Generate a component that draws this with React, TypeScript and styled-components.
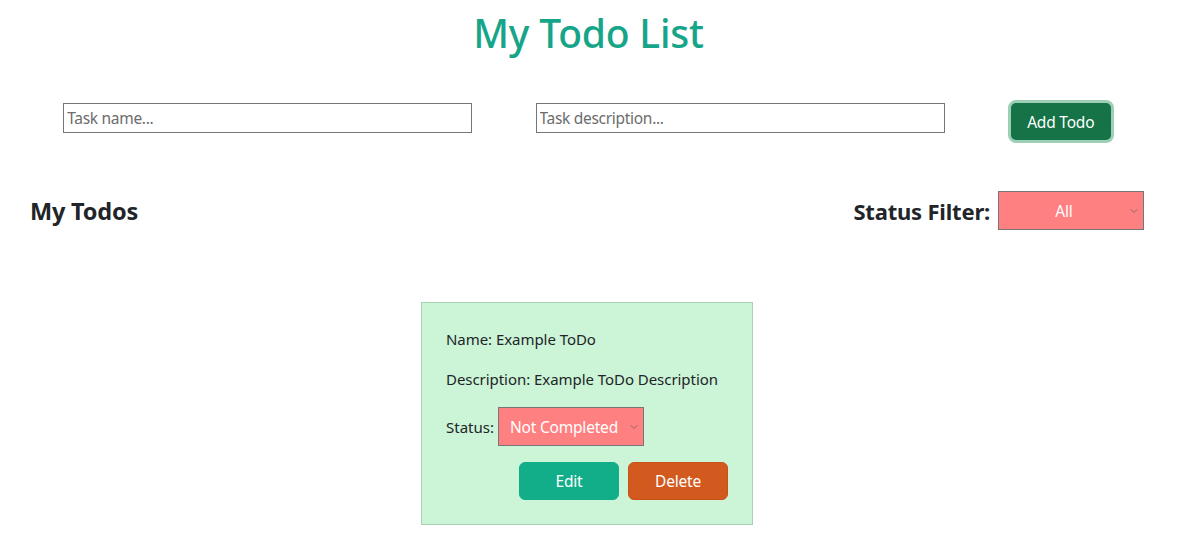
import React from "react";
import styled, { createGlobalStyle } from "styled-components";
import { ChevronDown } from "lucide-react";

const GlobalStyle = createGlobalStyle`
  body {
    margin: 0;
    background: #ffffff;
    font-family: "Noto Sans", "Open Sans", sans-serif;
    color: #212529;
  }
`;

const Page = styled.div`
  width: 100%;
  min-height: 100vh;
  display: flex;
  flex-direction: column;
`;

const Title = styled.h1`
  margin: 9px 0 0;
  text-align: center;
  font-size: 39px;
  line-height: 48px;
  font-weight: 500;
  color: #17a589;
  letter-spacing: -0.2px;
`;

const FormRow = styled.div`
  display: flex;
  justify-content: space-evenly;
  align-items: flex-start;
  margin-top: 43px;
`;

const TextInput = styled.input`
  box-sizing: border-box;
  width: 409px;
  height: 30px;
  margin-top: 3px;
  padding: 0 3px;
  border: 1px solid #767676;
  font-family: "Noto Sans", sans-serif;
  font-size: 15.5px;
  letter-spacing: -0.3px;
  color: #212529;
  outline: none;

  &::placeholder {
    color: #6c6c6c;
  }
`;

const AddButton = styled.button`
  box-sizing: border-box;
  width: 106px;
  height: 43px;
  border: 3px solid #9ccfb6;
  border-radius: 8px;
  background: #157347;
  color: #ffffff;
  font-family: "Noto Sans", sans-serif;
  font-size: 15.5px;
  letter-spacing: -0.2px;
`;

const HeaderRow = styled.div`
  display: flex;
  justify-content: space-between;
  align-items: center;
  padding: 0 33px 0 30px;
  margin-top: 48px;
`;

const SectionTitle = styled.h2<{ $size?: number }>`
  margin: 0;
  font-size: ${(p) => p.$size ?? 22}px;
  font-weight: 700;
  color: #212529;
  letter-spacing: -0.2px;
`;

const FilterGroup = styled.div`
  display: flex;
  align-items: center;
  gap: 8px;
`;

const SelectWrap = styled.div`
  position: relative;
  display: inline-flex;
`;

const Select = styled.select<{ $centered?: boolean }>`
  appearance: none;
  box-sizing: border-box;
  width: 146px;
  height: 39px;
  border: 1px solid #767676;
  border-radius: 0;
  background: #ff8080;
  color: #ffffff;
  font-family: "Noto Sans", sans-serif;
  font-size: 15.5px;
  padding: ${(p) => (p.$centered ? "0 14px 0 0" : "0 20px 0 11px")};
  text-align: ${(p) => (p.$centered ? "center" : "left")};
  text-align-last: ${(p) => (p.$centered ? "center" : "left")};
  letter-spacing: -0.2px;
  outline: none;
`;

const Chevron = styled(ChevronDown)`
  position: absolute;
  right: 4px;
  top: 50%;
  transform: translateY(-50%);
  color: #8a6a6a;
  pointer-events: none;
`;

const CardArea = styled.div`
  display: flex;
  justify-content: center;
  margin-top: 72px;
  padding-right: 3px;
`;

const Card = styled.div`
  box-sizing: border-box;
  width: 332px;
  padding: 26px 24px 24px;
  background: #ccf4d6;
  border: 1px solid #a8d0b2;
  display: flex;
  flex-direction: column;
`;

const Line = styled.p`
  margin: 0 0 20px;
  font-size: 15px;
  line-height: 20px;
  color: #212529;
  letter-spacing: -0.05px;
`;

const StatusRow = styled.div`
  display: flex;
  align-items: center;
  gap: 4px;
  font-size: 15px;
  margin-top: -2px;
`;

const Actions = styled.div`
  display: flex;
  justify-content: flex-end;
  gap: 9px;
  margin-top: 16px;
`;

const ActionButton = styled.button<{ $variant: "edit" | "delete" }>`
  box-sizing: border-box;
  width: 100px;
  height: 38px;
  border: 1px solid
    ${(p) => (p.$variant === "edit" ? "#12ae8a" : "#c9521a")};
  border-radius: 6px;
  background: ${(p) => (p.$variant === "edit" ? "#12ae8a" : "#d25a1f")};
  color: #ffffff;
  font-family: "Noto Sans", sans-serif;
  font-size: 15.5px;
  letter-spacing: -0.2px;
`;

export default function App() {
  return (
    <Page>
      <GlobalStyle />
      <Title>My Todo List</Title>

      <FormRow>
        <TextInput placeholder="Task name..." />
        <TextInput placeholder="Task description..." />
        <AddButton>Add Todo</AddButton>
      </FormRow>

      <HeaderRow>
        <SectionTitle $size={23.5}>My Todos</SectionTitle>
        <FilterGroup>
          <SectionTitle>Status Filter:</SectionTitle>
          <SelectWrap>
            <Select $centered defaultValue="all">
              <option value="all">All</option>
              <option value="completed">Completed</option>
              <option value="not">Not Completed</option>
            </Select>
            <Chevron size={12} strokeWidth={2} />
          </SelectWrap>
        </FilterGroup>
      </HeaderRow>

      <CardArea>
        <Card>
          <Line>Name: Example ToDo</Line>
          <Line>Description: Example ToDo Description</Line>
          <StatusRow>
            <span>Status:</span>
            <SelectWrap>
              <Select defaultValue="not">
                <option value="not">Not Completed</option>
                <option value="completed">Completed</option>
              </Select>
              <Chevron size={12} strokeWidth={2} />
            </SelectWrap>
          </StatusRow>
          <Actions>
            <ActionButton $variant="edit">Edit</ActionButton>
            <ActionButton $variant="delete">Delete</ActionButton>
          </Actions>
        </Card>
      </CardArea>
    </Page>
  );
}
